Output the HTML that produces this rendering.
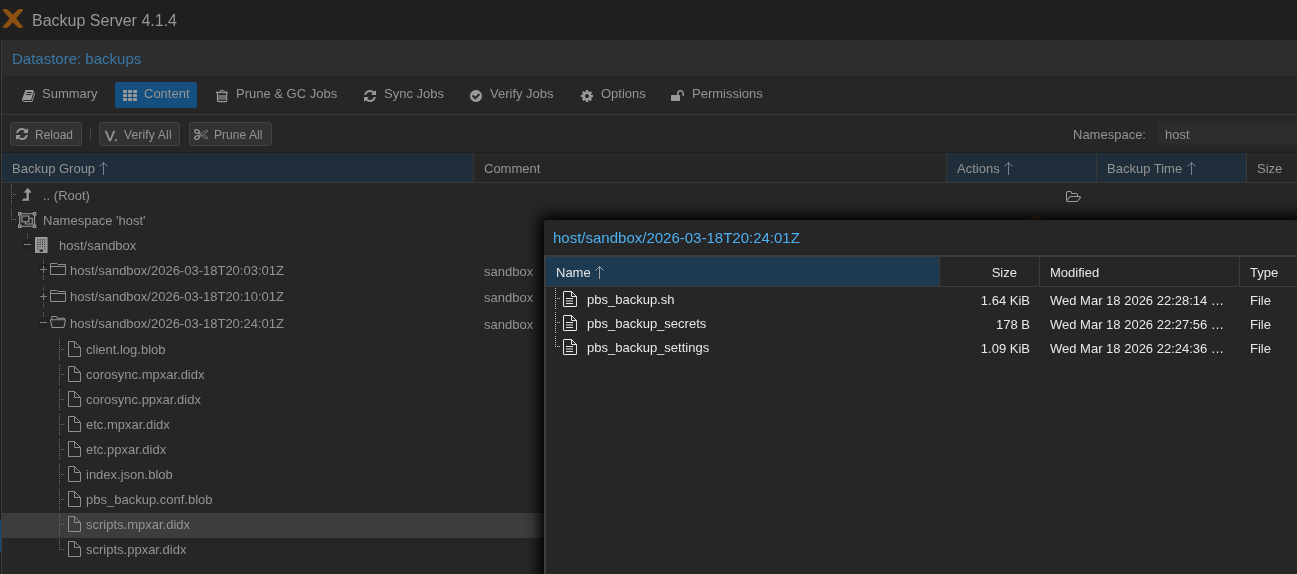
<!DOCTYPE html>
<html><head><meta charset="utf-8"><title>Backup Server</title>
<style>
html,body{margin:0;padding:0;background:#262626;}
body{width:1297px;height:574px;overflow:hidden;position:relative;font-family:"Liberation Sans",sans-serif;font-size:13px;color:#949494;}
div,span{position:absolute;white-space:nowrap;box-sizing:border-box;}
.i{position:absolute;display:block;overflow:visible;}
.t{line-height:16px;height:16px;}
.btn{border:1px solid #424242;background:#323232;border-radius:3px;height:24px;}
.w{color:#e8e8e8;}
span{will-change:transform;}
</style></head><body>

<div style="left:0;top:0;width:1297px;height:40px;background:#1f1f1f"></div>
<svg class="i" style="left:0;top:0;width:32px;height:40px" viewBox="0 0 32 40"><path d="M2.7 10.2Q2.9 9.1 4 9.1H6.6Q7.4 9.1 8 9.7L12.9 14.5L17.8 9.7Q18.4 9.1 19.2 9.1H21.8Q22.9 9.1 23.1 10.2L16.2 18.5L23.1 26.8Q22.9 27.9 21.8 27.9H19.2Q18.4 27.9 17.8 27.3L12.9 22.5L8 27.3Q7.4 27.9 6.6 27.9H4Q2.9 27.9 2.7 26.8L9.6 18.5Z" fill="#8b5012"/></svg>
<span class="t" style="left:32px;top:11px;font-size:16px;line-height:20px;height:20px;color:#979797">Backup Server 4.1.4</span>
<div style="left:0;top:40px;width:1px;height:534px;background:#1f1f1f"></div>
<div style="left:1px;top:40px;width:1px;height:534px;background:#3c3c3c"></div>
<div style="left:0;top:520px;width:1px;height:32px;background:#144c7a"></div>
<div style="left:2px;top:40px;width:1295px;height:36px;background:#2d2d2d"></div>
<span class="t" style="left:12px;top:49px;font-size:15px;line-height:20px;height:20px;color:#3a78a8">Datastore: backups</span>
<div style="left:2px;top:76px;width:1295px;height:38px;background:#262626"></div>
<div style="left:2px;top:114px;width:1295px;height:1px;background:#383838"></div>
<div style="left:115px;top:82px;width:82px;height:26px;background:#154f80;border-radius:2px"></div>
<svg class="i" style="left:22px;top:89px;width:13px;height:14px" viewBox="0 0 1664 1792" ><path fill="#9a9a9a" transform="translate(0,1536) scale(1,-1)" d="M1639 1058q40 -57 18 -129l-275 -906q-19 -64 -76.5 -107.5t-122.5 -43.5h-923q-77 0 -148.5 53.5t-99.5 131.5q-24 67 -2 127q0 4 3 27t4 37q1 8 -3 21.5t-3 19.5q2 11 8 21t16.5 23.5t16.5 23.5q23 38 45 91.5t30 91.5q3 10 0.5 30t-0.5 28q3 11 17 28t17 23 q21 36 42 92t25 90q1 9 -2.5 32t0.5 28q4 13 22 30.5t22 22.5q19 26 42.5 84.5t27.5 96.5q1 8 -3 25.5t-2 26.5q2 8 9 18t18 23t17 21q8 12 16.5 30.5t15 35t16 36t19.5 32t26.5 23.5t36 11.5t47.5 -5.5l-1 -3q38 9 51 9h761q74 0 114 -56t18 -130l-274 -906 q-36 -119 -71.5 -153.5t-128.5 -34.5h-869q-27 0 -38 -15q-11 -16 -1 -43q24 -70 144 -70h923q29 0 56 15.5t35 41.5l300 987q7 22 5 57q38 -15 59 -43zM575 1056q-4 -13 2 -22.5t20 -9.5h608q13 0 25.5 9.5t16.5 22.5l21 64q4 13 -2 22.5t-20 9.5h-608q-13 0 -25.5 -9.5 t-16.5 -22.5zM492 800q-4 -13 2 -22.5t20 -9.5h608q13 0 25.5 9.5t16.5 22.5l21 64q4 13 -2 22.5t-20 9.5h-608q-13 0 -25.5 -9.5t-16.5 -22.5z"/></svg>
<span class="t" style="left:42px;top:86px">Summary</span>
<svg class="i" style="left:123px;top:89px;width:14px;height:14px" viewBox="0 0 1792 1792" ><path fill="#9a9a9a" transform="translate(0,1536) scale(1,-1)" d="M512 288v-192q0 -40 -28 -68t-68 -28h-320q-40 0 -68 28t-28 68v192q0 40 28 68t68 28h320q40 0 68 -28t28 -68zM512 800v-192q0 -40 -28 -68t-68 -28h-320q-40 0 -68 28t-28 68v192q0 40 28 68t68 28h320q40 0 68 -28t28 -68zM1152 288v-192q0 -40 -28 -68t-68 -28h-320 q-40 0 -68 28t-28 68v192q0 40 28 68t68 28h320q40 0 68 -28t28 -68zM512 1312v-192q0 -40 -28 -68t-68 -28h-320q-40 0 -68 28t-28 68v192q0 40 28 68t68 28h320q40 0 68 -28t28 -68zM1152 800v-192q0 -40 -28 -68t-68 -28h-320q-40 0 -68 28t-28 68v192q0 40 28 68t68 28 h320q40 0 68 -28t28 -68zM1792 288v-192q0 -40 -28 -68t-68 -28h-320q-40 0 -68 28t-28 68v192q0 40 28 68t68 28h320q40 0 68 -28t28 -68zM1152 1312v-192q0 -40 -28 -68t-68 -28h-320q-40 0 -68 28t-28 68v192q0 40 28 68t68 28h320q40 0 68 -28t28 -68zM1792 800v-192 q0 -40 -28 -68t-68 -28h-320q-40 0 -68 28t-28 68v192q0 40 28 68t68 28h320q40 0 68 -28t28 -68zM1792 1312v-192q0 -40 -28 -68t-68 -28h-320q-40 0 -68 28t-28 68v192q0 40 28 68t68 28h320q40 0 68 -28t28 -68z"/></svg>
<span class="t" style="left:144px;top:86px">Content</span>
<svg class="i" style="left:214px;top:88px;width:16px;height:16px" viewBox="0 0 16 16"><path d="M5.9 3.7Q5.9 2.4 7 2.4H9.3Q10.4 2.4 10.4 3.7" fill="none" stroke="#9a9a9a" stroke-width="0.9"/><rect x="2.1" y="3.7" width="11.8" height="1.4" fill="#9a9a9a"/><path d="M3.5 5.1V12.6Q3.5 13.7 4.6 13.7H11.6Q12.7 13.7 12.7 12.6V5.1" fill="none" stroke="#9a9a9a" stroke-width="1.2"/><rect x="4.1" y="6.9" width="8" height="5" fill="#6c6c6c"/></svg>
<span class="t" style="left:236px;top:86px">Prune &amp; GC Jobs</span>
<svg class="i" style="left:364px;top:89px;width:12px;height:14px" viewBox="0 0 1536 1792" ><path fill="#9a9a9a" transform="translate(0,1536) scale(1,-1)" d="M1511 480q0 -5 -1 -7q-64 -268 -268 -434.5t-478 -166.5q-146 0 -282.5 55t-243.5 157l-129 -129q-19 -19 -45 -19t-45 19t-19 45v448q0 26 19 45t45 19h448q26 0 45 -19t19 -45t-19 -45l-137 -137q71 -66 161 -102t187 -36q134 0 250 65t186 179q11 17 53 117 q8 23 30 23h192q13 0 22.5 -9.5t9.5 -22.5zM1536 1280v-448q0 -26 -19 -45t-45 -19h-448q-26 0 -45 19t-19 45t19 45l138 138q-148 137 -349 137q-134 0 -250 -65t-186 -179q-11 -17 -53 -117q-8 -23 -30 -23h-199q-13 0 -22.5 9.5t-9.5 22.5v7q65 268 270 434.5t480 166.5 q146 0 284 -55.5t245 -156.5l130 129q19 19 45 19t45 -19t19 -45z"/></svg>
<span class="t" style="left:384px;top:86px">Sync Jobs</span>
<svg class="i" style="left:470px;top:89px;width:12px;height:14px" viewBox="0 0 1536 1792" ><path fill="#9a9a9a" transform="translate(0,1536) scale(1,-1)" d="M1284 802q0 28 -18 46l-91 90q-19 19 -45 19t-45 -19l-408 -407l-226 226q-19 19 -45 19t-45 -19l-91 -90q-18 -18 -18 -46q0 -27 18 -45l362 -362q19 -19 45 -19q27 0 46 19l543 543q18 18 18 45zM1536 640q0 -209 -103 -385.5t-279.5 -279.5t-385.5 -103t-385.5 103 t-279.5 279.5t-103 385.5t103 385.5t279.5 279.5t385.5 103t385.5 -103t279.5 -279.5t103 -385.5z"/></svg>
<span class="t" style="left:490px;top:86px">Verify Jobs</span>
<svg class="i" style="left:581px;top:89px;width:12px;height:14px" viewBox="0 0 1536 1792" ><path fill="#9a9a9a" transform="translate(0,1536) scale(1,-1)" d="M1024 640q0 106 -75 181t-181 75t-181 -75t-75 -181t75 -181t181 -75t181 75t75 181zM1536 749v-222q0 -12 -8 -23t-20 -13l-185 -28q-19 -54 -39 -91q35 -50 107 -138q10 -12 10 -25t-9 -23q-27 -37 -99 -108t-94 -71q-12 0 -26 9l-138 108q-44 -23 -91 -38 q-16 -136 -29 -186q-7 -28 -36 -28h-222q-14 0 -24.5 8.5t-11.5 21.5l-28 184q-49 16 -90 37l-141 -107q-10 -9 -25 -9q-14 0 -25 11q-126 114 -165 168q-7 10 -7 23q0 12 8 23q15 21 51 66.5t54 70.5q-27 50 -41 99l-183 27q-13 2 -21 12.5t-8 23.5v222q0 12 8 23t19 13 l186 28q14 46 39 92q-40 57 -107 138q-10 12 -10 24q0 10 9 23q26 36 98.5 107.5t94.5 71.5q13 0 26 -10l138 -107q44 23 91 38q16 136 29 186q7 28 36 28h222q14 0 24.5 -8.5t11.5 -21.5l28 -184q49 -16 90 -37l142 107q9 9 24 9q13 0 25 -10q129 -119 165 -170q7 -8 7 -22 q0 -12 -8 -23q-15 -21 -51 -66.5t-54 -70.5q26 -50 41 -98l183 -28q13 -2 21 -12.5t8 -23.5z"/></svg>
<span class="t" style="left:601px;top:86px">Options</span>
<svg class="i" style="left:671px;top:89px;width:13px;height:14px" viewBox="0 0 1664 1792" ><path fill="#9a9a9a" transform="translate(0,1536) scale(1,-1)" d="M1664 960v-256q0 -26 -19 -45t-45 -19h-64q-26 0 -45 19t-19 45v256q0 106 -75 181t-181 75t-181 -75t-75 -181v-192h96q40 0 68 -28t28 -68v-576q0 -40 -28 -68t-68 -28h-960q-40 0 -68 28t-28 68v576q0 40 28 68t68 28h672v192q0 185 131.5 316.5t316.5 131.5 t316.5 -131.5t131.5 -316.5z"/></svg>
<span class="t" style="left:692px;top:86px">Permissions</span>
<div class="btn" style="left:10px;top:122px;width:72px"></div>
<svg class="i" style="left:16px;top:127px;width:12px;height:14px" viewBox="0 0 1536 1792" ><path fill="#9a9a9a" transform="translate(0,1536) scale(1,-1)" d="M1511 480q0 -5 -1 -7q-64 -268 -268 -434.5t-478 -166.5q-146 0 -282.5 55t-243.5 157l-129 -129q-19 -19 -45 -19t-45 19t-19 45v448q0 26 19 45t45 19h448q26 0 45 -19t19 -45t-19 -45l-137 -137q71 -66 161 -102t187 -36q134 0 250 65t186 179q11 17 53 117 q8 23 30 23h192q13 0 22.5 -9.5t9.5 -22.5zM1536 1280v-448q0 -26 -19 -45t-45 -19h-448q-26 0 -45 19t-19 45t19 45l138 138q-148 137 -349 137q-134 0 -250 -65t-186 -179q-11 -17 -53 -117q-8 -23 -30 -23h-199q-13 0 -22.5 9.5t-9.5 22.5v7q65 268 270 434.5t480 166.5 q146 0 284 -55.5t245 -156.5l130 129q19 19 45 19t45 -19t19 -45z"/></svg>
<span class="t" style="left:35px;top:127px;font-size:12px">Reload</span>
<div style="left:90px;top:127px;width:1px;height:14px;background:#454545"></div>
<div class="btn" style="left:99px;top:122px;width:81px"></div>
<span class="t" id="vdot" style="left:105px;top:128px;font-size:15px;color:#9a9a9a;letter-spacing:0px;-webkit-text-stroke:0.4px #9a9a9a">V.</span>
<span class="t" style="left:124px;top:127px;font-size:12px;letter-spacing:0.17px">Verify All</span>
<div class="btn" style="left:189px;top:122px;width:83px"></div>
<svg class="i" style="left:194px;top:127px;width:14px;height:14px" viewBox="0 0 1792 1792" ><path fill="#9a9a9a" transform="translate(0,1536) scale(1,-1)" d="M960 640q26 0 45 -19t19 -45t-19 -45t-45 -19t-45 19t-19 45t19 45t45 19zM1260 576l507 -398q28 -20 25 -56q-5 -35 -35 -51l-128 -64q-13 -7 -29 -7q-17 0 -31 8l-690 387l-110 -66q-8 -4 -12 -5q14 -49 10 -97q-7 -77 -56 -147.5t-132 -123.5q-132 -84 -277 -84 q-136 0 -222 78q-90 84 -79 207q7 76 56 147t131 124q132 84 278 84q83 0 151 -31q9 13 22 22l122 73l-122 73q-13 9 -22 22q-68 -31 -151 -31q-146 0 -278 84q-82 53 -131 124t-56 147q-5 59 15.5 113t63.5 93q85 79 222 79q145 0 277 -84q83 -52 132 -123t56 -148 q4 -48 -10 -97q4 -1 12 -5l110 -66l690 387q14 8 31 8q16 0 29 -7l128 -64q30 -16 35 -51q3 -36 -25 -56zM579 836q46 42 21 108t-106 117q-92 59 -192 59q-74 0 -113 -36q-46 -42 -21 -108t106 -117q92 -59 192 -59q74 0 113 36zM494 91q81 51 106 117t-21 108 q-39 36 -113 36q-100 0 -192 -59q-81 -51 -106 -117t21 -108q39 -36 113 -36q100 0 192 59zM672 704l96 -58v11q0 36 33 56l14 8l-79 47l-26 -26q-3 -3 -10 -11t-12 -12q-2 -2 -4 -3.5t-3 -2.5zM896 480l96 -32l736 576l-128 64l-768 -431v-113l-160 -96l9 -8q2 -2 7 -6 q4 -4 11 -12t11 -12l26 -26zM1600 64l128 64l-520 408l-177 -138q-2 -3 -13 -7z"/></svg>
<span class="t" style="left:214px;top:127px;font-size:12px;letter-spacing:0.06px">Prune All</span>
<span class="t" style="left:1073px;top:127px">Namespace:</span>
<div style="left:1158px;top:121px;width:139px;height:24px;background:#2c2c2c"></div>
<span class="t" style="left:1165px;top:127px">host</span>
<div style="left:2px;top:152px;width:1295px;height:1px;background:#1f1f1f"></div>
<div style="left:2px;top:153px;width:1295px;height:29px;background:#262626"></div>
<div style="left:2px;top:153px;width:471px;height:29px;background:#202d3a"></div>
<div style="left:947px;top:153px;width:149px;height:29px;background:#202d3a"></div>
<div style="left:1097px;top:153px;width:149px;height:29px;background:#202d3a"></div>
<div style="left:473px;top:153px;width:1px;height:29px;background:#383838"></div>
<div style="left:946px;top:153px;width:1px;height:29px;background:#383838"></div>
<div style="left:1096px;top:153px;width:1px;height:29px;background:#383838"></div>
<div style="left:1246px;top:153px;width:1px;height:29px;background:#383838"></div>
<div style="left:2px;top:182px;width:1295px;height:1px;background:#383838"></div>
<span class="t" style="left:12px;top:161px">Backup Group</span>
<span class="t" style="left:484px;top:161px">Comment</span>
<span class="t" style="left:957px;top:161px">Actions</span>
<span class="t" style="left:1107px;top:161px">Backup Time</span>
<span class="t" style="left:1257px;top:161px">Size</span>
<svg class="i" style="left:98px;top:161px;width:11px;height:15px" viewBox="0 0 11 15"><path d="M5.5 1.5V14M1.5 5.5L5.5 1.5L9.5 5.5" fill="none" stroke="#76828c" stroke-width="1"/></svg>
<svg class="i" style="left:1003px;top:161px;width:11px;height:15px" viewBox="0 0 11 15"><path d="M5.5 1.5V14M1.5 5.5L5.5 1.5L9.5 5.5" fill="none" stroke="#76828c" stroke-width="1"/></svg>
<svg class="i" style="left:1186px;top:161px;width:11px;height:15px" viewBox="0 0 11 15"><path d="M5.5 1.5V14M1.5 5.5L5.5 1.5L9.5 5.5" fill="none" stroke="#76828c" stroke-width="1"/></svg>
<div style="left:2px;top:513px;width:542px;height:25px;background:#3d3d3d"></div>
<svg class="i" style="left:21.5px;top:187px;width:9.14286px;height:16px" viewBox="0 0 1024 1792" ><path fill="#9a9a9a" transform="translate(0,1536) scale(1,-1)" d="M1018 933q-18 -37 -58 -37h-192v-864q0 -14 -9 -23t-23 -9h-704q-21 0 -29 18q-8 20 4 35l160 192q9 11 25 11h320v640h-192q-40 0 -58 37q-17 37 9 68l320 384q18 22 49 22t49 -22l320 -384q27 -32 9 -68z"/></svg>
<span class="t" style="left:43px;top:188px">.. (Root)</span>
<svg class="i" style="left:18px;top:212px;width:18.2857px;height:16px" viewBox="0 0 2048 1792" ><path fill="#9a9a9a" transform="translate(0,1536) scale(1,-1)" d="M2048 1152h-128v-1024h128v-384h-384v128h-1280v-128h-384v384h128v1024h-128v384h384v-128h1280v128h384v-384zM1792 1408v-128h128v128h-128zM128 1408v-128h128v128h-128zM256 -128v128h-128v-128h128zM1664 0v128h128v1024h-128v128h-1280v-128h-128v-1024h128v-128 h1280zM1920 -128v128h-128v-128h128zM1280 896h384v-768h-896v256h-384v768h896v-256zM512 512h640v512h-640v-512zM1536 256v512h-256v-384h-384v-128h640z"/></svg>
<span class="t" style="left:43px;top:213px">Namespace 'host'</span>
<svg class="i" style="left:35px;top:237px;width:13.7143px;height:16px" viewBox="0 0 1536 1792" ><path fill="#9a9a9a" transform="translate(0,1536) scale(1,-1)" d="M1344 1536q26 0 45 -19t19 -45v-1664q0 -26 -19 -45t-45 -19h-1280q-26 0 -45 19t-19 45v1664q0 26 19 45t45 19h1280zM512 1248v-64q0 -14 9 -23t23 -9h64q14 0 23 9t9 23v64q0 14 -9 23t-23 9h-64q-14 0 -23 -9t-9 -23zM512 992v-64q0 -14 9 -23t23 -9h64q14 0 23 9 t9 23v64q0 14 -9 23t-23 9h-64q-14 0 -23 -9t-9 -23zM512 736v-64q0 -14 9 -23t23 -9h64q14 0 23 9t9 23v64q0 14 -9 23t-23 9h-64q-14 0 -23 -9t-9 -23zM512 480v-64q0 -14 9 -23t23 -9h64q14 0 23 9t9 23v64q0 14 -9 23t-23 9h-64q-14 0 -23 -9t-9 -23zM384 160v64 q0 14 -9 23t-23 9h-64q-14 0 -23 -9t-9 -23v-64q0 -14 9 -23t23 -9h64q14 0 23 9t9 23zM384 416v64q0 14 -9 23t-23 9h-64q-14 0 -23 -9t-9 -23v-64q0 -14 9 -23t23 -9h64q14 0 23 9t9 23zM384 672v64q0 14 -9 23t-23 9h-64q-14 0 -23 -9t-9 -23v-64q0 -14 9 -23t23 -9h64 q14 0 23 9t9 23zM384 928v64q0 14 -9 23t-23 9h-64q-14 0 -23 -9t-9 -23v-64q0 -14 9 -23t23 -9h64q14 0 23 9t9 23zM384 1184v64q0 14 -9 23t-23 9h-64q-14 0 -23 -9t-9 -23v-64q0 -14 9 -23t23 -9h64q14 0 23 9t9 23zM896 -96v192q0 14 -9 23t-23 9h-320q-14 0 -23 -9 t-9 -23v-192q0 -14 9 -23t23 -9h320q14 0 23 9t9 23zM896 416v64q0 14 -9 23t-23 9h-64q-14 0 -23 -9t-9 -23v-64q0 -14 9 -23t23 -9h64q14 0 23 9t9 23zM896 672v64q0 14 -9 23t-23 9h-64q-14 0 -23 -9t-9 -23v-64q0 -14 9 -23t23 -9h64q14 0 23 9t9 23zM896 928v64 q0 14 -9 23t-23 9h-64q-14 0 -23 -9t-9 -23v-64q0 -14 9 -23t23 -9h64q14 0 23 9t9 23zM896 1184v64q0 14 -9 23t-23 9h-64q-14 0 -23 -9t-9 -23v-64q0 -14 9 -23t23 -9h64q14 0 23 9t9 23zM1152 160v64q0 14 -9 23t-23 9h-64q-14 0 -23 -9t-9 -23v-64q0 -14 9 -23t23 -9h64 q14 0 23 9t9 23zM1152 416v64q0 14 -9 23t-23 9h-64q-14 0 -23 -9t-9 -23v-64q0 -14 9 -23t23 -9h64q14 0 23 9t9 23zM1152 672v64q0 14 -9 23t-23 9h-64q-14 0 -23 -9t-9 -23v-64q0 -14 9 -23t23 -9h64q14 0 23 9t9 23zM1152 928v64q0 14 -9 23t-23 9h-64q-14 0 -23 -9 t-9 -23v-64q0 -14 9 -23t23 -9h64q14 0 23 9t9 23zM1152 1184v64q0 14 -9 23t-23 9h-64q-14 0 -23 -9t-9 -23v-64q0 -14 9 -23t23 -9h64q14 0 23 9t9 23z"/></svg>
<span class="t" style="left:59px;top:238px">host/sandbox</span>
<svg class="i" style="left:50px;top:263px;width:16px;height:12px" viewBox="0 0 16 12"><path d="M0.5 11.5V0.5H7L8 1.5H15.5V11.5Z M0.5 3.5H15.5" fill="none" stroke="#8e8e8e" stroke-width="1"/></svg>
<span class="t" style="left:70px;top:263px">host/sandbox/2026-03-18T20:03:01Z</span>
<svg class="i" style="left:50px;top:290px;width:16px;height:12px" viewBox="0 0 16 12"><path d="M0.5 11.5V0.5H7L8 1.5H15.5V11.5Z M0.5 3.5H15.5" fill="none" stroke="#8e8e8e" stroke-width="1"/></svg>
<span class="t" style="left:70px;top:289px">host/sandbox/2026-03-18T20:10:01Z</span>
<svg class="i" style="left:49px;top:314px;width:18px;height:16px" viewBox="0 0 18 16"><path d="M2.7 5.8V3.1Q2.7 2.4 3.4 2.4H6.8Q7.2 2.4 7.5 2.8L8.4 4.2H14.7Q15.5 4.2 15.5 5V5.8" fill="none" stroke="#949494" stroke-width="1.05"/><path d="M2.3 5.8H15.7Q16.6 5.8 16.4 6.7L15.1 12.65Q14.9 13.55 14 13.55H4Q3.1 13.55 2.9 12.65L1.6 6.7Q1.4 5.8 2.3 5.8Z" fill="none" stroke="#949494" stroke-width="1.05"/></svg>
<span class="t" style="left:70px;top:316px">host/sandbox/2026-03-18T20:24:01Z</span>
<div style="left:11px;top:184px;width:1px;height:21px;background:repeating-linear-gradient(to bottom,#6c6c6c 0,#6c6c6c 1px,transparent 1px,transparent 2px)"></div>
<div style="left:11px;top:194px;height:1px;width:5px;background:repeating-linear-gradient(to right,#6c6c6c 0,#6c6c6c 1px,transparent 1px,transparent 2px)"></div>
<div style="left:11px;top:209px;width:1px;height:11px;background:repeating-linear-gradient(to bottom,#6c6c6c 0,#6c6c6c 1px,transparent 1px,transparent 2px)"></div>
<div style="left:11px;top:219px;height:1px;width:5px;background:repeating-linear-gradient(to right,#6c6c6c 0,#6c6c6c 1px,transparent 1px,transparent 2px)"></div>
<div style="left:27px;top:234px;width:1px;height:6px;background:repeating-linear-gradient(to bottom,#6c6c6c 0,#6c6c6c 1px,transparent 1px,transparent 2px)"></div>
<div style="left:22px;top:239px;width:11px;height:11px;background:#232323"></div><div style="left:24px;top:244px;width:7px;height:1px;background:#808080"></div>
<div style="left:43px;top:259px;width:1px;height:21px;background:repeating-linear-gradient(to bottom,#6c6c6c 0,#6c6c6c 1px,transparent 1px,transparent 2px)"></div>
<div style="left:38px;top:264px;width:11px;height:11px;background:#232323"></div><div style="left:40px;top:269px;width:7px;height:1px;background:#808080"></div><div style="left:43px;top:266px;width:1px;height:7px;background:#808080"></div>
<div style="left:43px;top:286px;width:1px;height:21px;background:repeating-linear-gradient(to bottom,#6c6c6c 0,#6c6c6c 1px,transparent 1px,transparent 2px)"></div>
<div style="left:38px;top:291px;width:11px;height:11px;background:#232323"></div><div style="left:40px;top:296px;width:7px;height:1px;background:#808080"></div><div style="left:43px;top:293px;width:1px;height:7px;background:#808080"></div>
<div style="left:43px;top:312px;width:1px;height:6px;background:repeating-linear-gradient(to bottom,#6c6c6c 0,#6c6c6c 1px,transparent 1px,transparent 2px)"></div>
<div style="left:38px;top:317px;width:11px;height:11px;background:#232323"></div><div style="left:40px;top:322px;width:7px;height:1px;background:#808080"></div>
<svg class="i" style="left:68px;top:341px;width:13px;height:16px" viewBox="0 0 13 16"><path d="M0.5 0.5H6.5L12.5 6.5V15.5H0.5Z M6.5 0.5V6.5H12.5" fill="none" stroke="#8e8e8e" stroke-width="1"/></svg>
<span class="t" style="left:86px;top:342px">client.log.blob</span>
<div style="left:59px;top:339px;width:1px;height:21px;background:repeating-linear-gradient(to bottom,#6c6c6c 0,#6c6c6c 1px,transparent 1px,transparent 2px)"></div>
<div style="left:59px;top:349px;height:1px;width:5px;background:repeating-linear-gradient(to right,#6c6c6c 0,#6c6c6c 1px,transparent 1px,transparent 2px)"></div>
<svg class="i" style="left:68px;top:366px;width:13px;height:16px" viewBox="0 0 13 16"><path d="M0.5 0.5H6.5L12.5 6.5V15.5H0.5Z M6.5 0.5V6.5H12.5" fill="none" stroke="#8e8e8e" stroke-width="1"/></svg>
<span class="t" style="left:86px;top:367px">corosync.mpxar.didx</span>
<div style="left:59px;top:364px;width:1px;height:21px;background:repeating-linear-gradient(to bottom,#6c6c6c 0,#6c6c6c 1px,transparent 1px,transparent 2px)"></div>
<div style="left:59px;top:374px;height:1px;width:5px;background:repeating-linear-gradient(to right,#6c6c6c 0,#6c6c6c 1px,transparent 1px,transparent 2px)"></div>
<svg class="i" style="left:68px;top:391px;width:13px;height:16px" viewBox="0 0 13 16"><path d="M0.5 0.5H6.5L12.5 6.5V15.5H0.5Z M6.5 0.5V6.5H12.5" fill="none" stroke="#8e8e8e" stroke-width="1"/></svg>
<span class="t" style="left:86px;top:392px">corosync.ppxar.didx</span>
<div style="left:59px;top:389px;width:1px;height:21px;background:repeating-linear-gradient(to bottom,#6c6c6c 0,#6c6c6c 1px,transparent 1px,transparent 2px)"></div>
<div style="left:59px;top:399px;height:1px;width:5px;background:repeating-linear-gradient(to right,#6c6c6c 0,#6c6c6c 1px,transparent 1px,transparent 2px)"></div>
<svg class="i" style="left:68px;top:416px;width:13px;height:16px" viewBox="0 0 13 16"><path d="M0.5 0.5H6.5L12.5 6.5V15.5H0.5Z M6.5 0.5V6.5H12.5" fill="none" stroke="#8e8e8e" stroke-width="1"/></svg>
<span class="t" style="left:86px;top:417px">etc.mpxar.didx</span>
<div style="left:59px;top:414px;width:1px;height:21px;background:repeating-linear-gradient(to bottom,#6c6c6c 0,#6c6c6c 1px,transparent 1px,transparent 2px)"></div>
<div style="left:59px;top:424px;height:1px;width:5px;background:repeating-linear-gradient(to right,#6c6c6c 0,#6c6c6c 1px,transparent 1px,transparent 2px)"></div>
<svg class="i" style="left:68px;top:441px;width:13px;height:16px" viewBox="0 0 13 16"><path d="M0.5 0.5H6.5L12.5 6.5V15.5H0.5Z M6.5 0.5V6.5H12.5" fill="none" stroke="#8e8e8e" stroke-width="1"/></svg>
<span class="t" style="left:86px;top:442px">etc.ppxar.didx</span>
<div style="left:59px;top:439px;width:1px;height:21px;background:repeating-linear-gradient(to bottom,#6c6c6c 0,#6c6c6c 1px,transparent 1px,transparent 2px)"></div>
<div style="left:59px;top:449px;height:1px;width:5px;background:repeating-linear-gradient(to right,#6c6c6c 0,#6c6c6c 1px,transparent 1px,transparent 2px)"></div>
<svg class="i" style="left:68px;top:466px;width:13px;height:16px" viewBox="0 0 13 16"><path d="M0.5 0.5H6.5L12.5 6.5V15.5H0.5Z M6.5 0.5V6.5H12.5" fill="none" stroke="#8e8e8e" stroke-width="1"/></svg>
<span class="t" style="left:86px;top:467px">index.json.blob</span>
<div style="left:59px;top:464px;width:1px;height:21px;background:repeating-linear-gradient(to bottom,#6c6c6c 0,#6c6c6c 1px,transparent 1px,transparent 2px)"></div>
<div style="left:59px;top:474px;height:1px;width:5px;background:repeating-linear-gradient(to right,#6c6c6c 0,#6c6c6c 1px,transparent 1px,transparent 2px)"></div>
<svg class="i" style="left:68px;top:491px;width:13px;height:16px" viewBox="0 0 13 16"><path d="M0.5 0.5H6.5L12.5 6.5V15.5H0.5Z M6.5 0.5V6.5H12.5" fill="none" stroke="#8e8e8e" stroke-width="1"/></svg>
<span class="t" style="left:86px;top:492px">pbs_backup.conf.blob</span>
<div style="left:59px;top:489px;width:1px;height:21px;background:repeating-linear-gradient(to bottom,#6c6c6c 0,#6c6c6c 1px,transparent 1px,transparent 2px)"></div>
<div style="left:59px;top:499px;height:1px;width:5px;background:repeating-linear-gradient(to right,#6c6c6c 0,#6c6c6c 1px,transparent 1px,transparent 2px)"></div>
<svg class="i" style="left:68px;top:516px;width:13px;height:16px" viewBox="0 0 13 16"><path d="M0.5 0.5H6.5L12.5 6.5V15.5H0.5Z M6.5 0.5V6.5H12.5" fill="none" stroke="#8e8e8e" stroke-width="1"/></svg>
<span class="t" style="left:86px;top:517px">scripts.mpxar.didx</span>
<div style="left:59px;top:514px;width:1px;height:21px;background:repeating-linear-gradient(to bottom,#6c6c6c 0,#6c6c6c 1px,transparent 1px,transparent 2px)"></div>
<div style="left:59px;top:524px;height:1px;width:5px;background:repeating-linear-gradient(to right,#6c6c6c 0,#6c6c6c 1px,transparent 1px,transparent 2px)"></div>
<svg class="i" style="left:68px;top:541px;width:13px;height:16px" viewBox="0 0 13 16"><path d="M0.5 0.5H6.5L12.5 6.5V15.5H0.5Z M6.5 0.5V6.5H12.5" fill="none" stroke="#8e8e8e" stroke-width="1"/></svg>
<span class="t" style="left:86px;top:542px">scripts.ppxar.didx</span>
<div style="left:59px;top:539px;width:1px;height:11px;background:repeating-linear-gradient(to bottom,#6c6c6c 0,#6c6c6c 1px,transparent 1px,transparent 2px)"></div>
<div style="left:59px;top:549px;height:1px;width:5px;background:repeating-linear-gradient(to right,#6c6c6c 0,#6c6c6c 1px,transparent 1px,transparent 2px)"></div>
<span class="t" style="left:484px;top:264px">sandbox</span>
<span class="t" style="left:484px;top:290px">sandbox</span>
<span class="t" style="left:484px;top:317px">sandbox</span>
<svg class="i" style="left:1066px;top:190px;width:15px;height:14px" viewBox="0 0 1920 1792" ><path fill="#9a9a9a" transform="translate(0,1536) scale(1,-1)" d="M1781 605q0 35 -53 35h-1088q-40 0 -85.5 -21.5t-71.5 -52.5l-294 -363q-18 -24 -18 -40q0 -35 53 -35h1088q40 0 86 22t71 53l294 363q18 22 18 39zM640 768h768v160q0 40 -28 68t-68 28h-576q-40 0 -68 28t-28 68v64q0 40 -28 68t-68 28h-320q-40 0 -68 -28t-28 -68 v-853l256 315q44 53 116 87.5t140 34.5zM1909 605q0 -62 -46 -120l-295 -363q-43 -53 -116 -87.5t-140 -34.5h-1088q-92 0 -158 66t-66 158v960q0 92 66 158t158 66h320q92 0 158 -66t66 -158v-32h544q92 0 158 -66t66 -158v-160h192q54 0 99 -24.5t67 -70.5q15 -32 15 -68z "/></svg>
<svg class="i" style="left:1028px;top:214px;width:16px;height:6px" viewBox="0 0 16 6"><path d="M2 4.5H13M5 4.5V3.2Q5 2.5 5.7 2.5H9.3Q10 2.5 10 3.2V4.5" fill="none" stroke="#7e3626" stroke-width="1"/></svg>
<div style="left:544px;top:220px;width:760px;height:360px;background:#262626;border-radius:3px;box-shadow:0 0 14px 5px #000"></div>
<span class="t" style="left:553px;top:228px;font-size:15px;line-height:20px;height:20px;color:#4cb0f2">host/sandbox/2026-03-18T20:24:01Z</span>
<div style="left:544px;top:255px;width:753px;height:2px;background:#3c3c3c"></div>
<div style="left:544px;top:255px;width:2px;height:320px;background:#3f3f3f"></div>
<div style="left:546px;top:257px;width:393px;height:29px;background:#1c3a52"></div>
<div style="left:939px;top:256px;width:1px;height:30px;background:#3c3c3c"></div>
<div style="left:1039px;top:256px;width:1px;height:30px;background:#3c3c3c"></div>
<div style="left:1239px;top:256px;width:1px;height:30px;background:#3c3c3c"></div>
<div style="left:545px;top:286px;width:752px;height:1px;background:#3c3c3c"></div>
<span class="t w" style="left:556px;top:265px">Name</span>
<span class="t w" style="left:1050px;top:265px">Modified</span>
<span class="t w" style="left:1250px;top:265px">Type</span>
<span class="t w" style="left:939px;width:78px;text-align:right;top:265px">Size</span>
<svg class="i" style="left:594px;top:265px;width:11px;height:15px" viewBox="0 0 11 15"><path d="M5.5 1.5V14M1.5 5.5L5.5 1.5L9.5 5.5" fill="none" stroke="#a4a4a4" stroke-width="1"/></svg>
<svg class="i" style="left:563px;top:291px;width:14px;height:16px" viewBox="0 0 14 16"><path d="M0.5 1Q0.5 0.5 1 0.5H8.5L13.5 5.5V15Q13.5 15.5 13 15.5H1Q0.5 15.5 0.5 15Z M8.5 0.5V5.5H13.5 M3 7.5H10 M3 10H10 M3 12.5H10" fill="none" stroke="#e6e6e6" stroke-width="1"/></svg>
<span class="t w" style="left:587px;top:292px">pbs_backup.sh</span>
<span class="t w" style="left:939px;width:91px;text-align:right;top:293px">1.64 KiB</span>
<span class="t w" style="left:1050px;top:293px">Wed Mar 18 2026 22:28:14 …</span>
<span class="t w" style="left:1250px;top:293px">File</span>
<div style="left:555px;top:288px;width:1px;height:21px;background:repeating-linear-gradient(to bottom,#bcbcbc 0,#bcbcbc 1px,transparent 1px,transparent 2px)"></div>
<div style="left:555px;top:298px;height:1px;width:5px;background:repeating-linear-gradient(to right,#bcbcbc 0,#bcbcbc 1px,transparent 1px,transparent 2px)"></div>
<svg class="i" style="left:563px;top:315px;width:14px;height:16px" viewBox="0 0 14 16"><path d="M0.5 1Q0.5 0.5 1 0.5H8.5L13.5 5.5V15Q13.5 15.5 13 15.5H1Q0.5 15.5 0.5 15Z M8.5 0.5V5.5H13.5 M3 7.5H10 M3 10H10 M3 12.5H10" fill="none" stroke="#e6e6e6" stroke-width="1"/></svg>
<span class="t w" style="left:587px;top:316px">pbs_backup_secrets</span>
<span class="t w" style="left:939px;width:91px;text-align:right;top:317px">178 B</span>
<span class="t w" style="left:1050px;top:317px">Wed Mar 18 2026 22:27:56 …</span>
<span class="t w" style="left:1250px;top:317px">File</span>
<div style="left:555px;top:312px;width:1px;height:21px;background:repeating-linear-gradient(to bottom,#bcbcbc 0,#bcbcbc 1px,transparent 1px,transparent 2px)"></div>
<div style="left:555px;top:322px;height:1px;width:5px;background:repeating-linear-gradient(to right,#bcbcbc 0,#bcbcbc 1px,transparent 1px,transparent 2px)"></div>
<svg class="i" style="left:563px;top:339px;width:14px;height:16px" viewBox="0 0 14 16"><path d="M0.5 1Q0.5 0.5 1 0.5H8.5L13.5 5.5V15Q13.5 15.5 13 15.5H1Q0.5 15.5 0.5 15Z M8.5 0.5V5.5H13.5 M3 7.5H10 M3 10H10 M3 12.5H10" fill="none" stroke="#e6e6e6" stroke-width="1"/></svg>
<span class="t w" style="left:587px;top:340px">pbs_backup_settings</span>
<span class="t w" style="left:939px;width:91px;text-align:right;top:341px">1.09 KiB</span>
<span class="t w" style="left:1050px;top:341px">Wed Mar 18 2026 22:24:36 …</span>
<span class="t w" style="left:1250px;top:341px">File</span>
<div style="left:555px;top:336px;width:1px;height:11px;background:repeating-linear-gradient(to bottom,#bcbcbc 0,#bcbcbc 1px,transparent 1px,transparent 2px)"></div>
<div style="left:555px;top:346px;height:1px;width:5px;background:repeating-linear-gradient(to right,#bcbcbc 0,#bcbcbc 1px,transparent 1px,transparent 2px)"></div>
</body></html>
